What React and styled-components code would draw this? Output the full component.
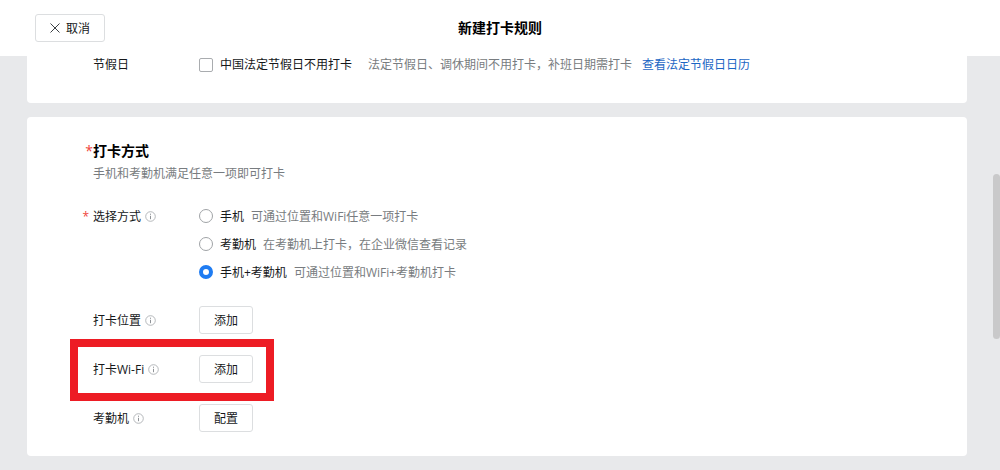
import { useState } from "react";
import styled, { createGlobalStyle } from "styled-components";

const methods = [
  { id: "phone", name: "手机", desc: "可通过位置和WiFi任意一项打卡" },
  { id: "machine", name: "考勤机", desc: "在考勤机上打卡，在企业微信查看记录" },
  { id: "both", name: "手机+考勤机", desc: "可通过位置和WiFi+考勤机打卡" },
];

const settings = [
  { id: "location", name: "打卡位置", action: "添加" },
  { id: "wifi", name: "打卡Wi-Fi", action: "添加", marked: true },
  { id: "device", name: "考勤机", action: "配置" },
];

function InfoIcon() {
  return (
    <svg width="11" height="11" viewBox="0 0 11 11" fill="none" aria-hidden="true">
      <circle cx="5.5" cy="5.5" r="4.8" stroke="#a3a7ab" strokeWidth="0.8" />
      <path d="M5.5 4.8V8.2" stroke="#8f9397" strokeWidth="1" />
      <path d="M5.5 2.7V3.8" stroke="#8f9397" strokeWidth="1" />
    </svg>
  );
}

function CloseIcon() {
  return (
    <svg width="10" height="10" viewBox="0 0 10 10" fill="none" aria-hidden="true">
      <path d="M0.5 0.5L9.5 9.5M9.5 0.5L0.5 9.5" stroke="#3c4044" strokeWidth="1" />
    </svg>
  );
}

function App() {
  const [method, setMethod] = useState("both");
  const [skipHoliday, setSkipHoliday] = useState(false);

  return (
    <>
      <GlobalStyle />
      <Header>
        <CancelButton type="button">
          <CloseIcon />
          取消
        </CancelButton>
        <PageTitle>新建打卡规则</PageTitle>
      </Header>
      <Main>
        <HolidayCard>
          <HolidayRow>
            <Label as="span">节假日</Label>
            <Option>
              <Checkbox
                type="checkbox"
                checked={skipHoliday}
                onChange={(e) => setSkipHoliday(e.target.checked)}
              />
              中国法定节假日不用打卡
            </Option>
            <HolidayHint>法定节假日、调休期间不用打卡，补班日期需打卡</HolidayHint>
            <CalendarLink href="#calendar">查看法定节假日日历</CalendarLink>
          </HolidayRow>
        </HolidayCard>

        <MethodCard>
          <SectionTitle>
            <Required>*</Required>打卡方式
          </SectionTitle>
          <SectionDesc>手机和考勤机满足任意一项即可打卡</SectionDesc>

          <MethodRow role="radiogroup" aria-labelledby="method-label">
            <Label as="span" id="method-label">
              <Required $wide>*</Required>选择方式
              <InfoIcon />
            </Label>
            <div>
              {methods.map(({ id, name, desc }) => (
                <Option key={id} $tall>
                  <Radio
                    type="radio"
                    name="method"
                    value={id}
                    checked={method === id}
                    onChange={() => setMethod(id)}
                  />
                  {name}
                  <Muted>{desc}</Muted>
                </Option>
              ))}
            </div>
          </MethodRow>

          <SettingList>
            {settings.map(({ id, name, action, marked }) => (
              <SettingRow key={id} $marked={marked}>
                <Label htmlFor={id}>
                  {name}
                  <InfoIcon />
                </Label>
                <Button type="button" id={id}>
                  {action}
                </Button>
              </SettingRow>
            ))}
          </SettingList>
        </MethodCard>
      </Main>
      <ScrollThumb />
    </>
  );
}

const GlobalStyle = createGlobalStyle`
  *, *::before, *::after {
    box-sizing: border-box;
  }

  body {
    margin: 0;
    min-height: 100vh;
    background: #e8e9eb;
    color: #16181a;
    font-family: "Open Sans", "Noto Sans CJK SC", sans-serif;
    font-size: 12px;
    line-height: 17px;
  }

  button, input {
    font: inherit;
    color: inherit;
  }
`;

const Header = styled.header`
  display: grid;
  grid-template-columns: 1fr auto 1fr;
  align-items: center;
  height: 56px;
  padding: 0 35px;
  background: #fff;
`;

const PageTitle = styled.h1`
  margin: 0;
  color: #000;
  font-size: 14px;
  font-weight: 700;
  line-height: 20px;
`;

const Button = styled.button`
  display: inline-flex;
  align-items: center;
  justify-content: center;
  gap: 6px;
  height: 28px;
  padding: 0 14px;
  border: 1px solid #dcdee0;
  border-radius: 3px;
  background: #fff;
  cursor: pointer;
  &:hover {
    background: #f5f6f7;
  }
`;

const CancelButton = styled(Button)`
  justify-self: start;
`;

const Main = styled.main`
  padding: 0 33px 14px 27px;
`;

const Card = styled.section`
  padding: 0 66px;
  border-radius: 4px;
  background: #fff;
`;

const HolidayCard = styled(Card)`
  padding-bottom: 30px;
  border-radius: 0 0 4px 4px;
`;

const MethodCard = styled(Card)`
  margin-top: 14px;
  padding-top: 24px;
  padding-bottom: 24px;
`;

const Row = styled.div`
  display: flex;
`;

const HolidayRow = styled(Row)`
  align-items: center;
`;

const MethodRow = styled(Row)`
  margin: 20px 0;
`;

const SettingList = styled.div`
  display: flex;
  flex-direction: column;
  gap: 21px;
`;

const SettingRow = styled(Row)`
  position: relative;
  ${({ $marked }) =>
    $marked &&
    `
    &::after {
      content: "";
      position: absolute;
      top: -16px;
      bottom: -18px;
      left: -23px;
      width: 204px;
      border: 8px solid #ed1c24;
      pointer-events: none;
    }
  `}
`;

const Label = styled.label`
  position: relative;
  display: flex;
  flex: none;
  align-items: center;
  gap: 4px;
  width: 106px;
  height: 28px;
  ${HolidayRow} & {
    height: 17px;
  }
`;

/* hangs to the left of the text it belongs to */
const Required = styled.span`
  position: absolute;
  right: 100%;
  color: #f0443c;
  font-weight: 400;
  ${({ $wide }) => $wide && "padding-right: 4px;"}
`;

const SectionTitle = styled.h2`
  position: relative;
  margin: 0;
  color: #000;
  font-size: 14px;
  font-weight: 700;
  line-height: 20px;
`;

const SectionDesc = styled.p`
  margin: 4px 0 0;
  color: #787c80;
`;

const Option = styled.label`
  display: flex;
  align-items: center;
  gap: 7px;
  height: ${({ $tall }) => ($tall ? "28px" : "17px")};
  white-space: nowrap;
  cursor: pointer;
`;

const Checkbox = styled.input`
  appearance: none;
  flex: none;
  width: 14px;
  height: 14px;
  margin: 0;
  border: 1px solid #a9acaf;
  border-radius: 2px;
  background: #fff;
  &:checked {
    border-color: #1f7cf2;
    background: #1f7cf2;
  }
`;

const Radio = styled.input`
  appearance: none;
  flex: none;
  width: 14px;
  height: 14px;
  margin: 0;
  border: 1px solid #a0a3a6;
  border-radius: 50%;
  background: #fff;
  &:checked {
    border: 4px solid #1f7cf2;
  }
`;

const Muted = styled.span`
  color: #787c80;
`;

const HolidayHint = styled(Muted)`
  margin: 0 10px 0 16px;
`;

const CalendarLink = styled.a`
  color: #1c66c4;
  text-decoration: none;
  &:hover {
    text-decoration: underline;
  }
`;

const ScrollThumb = styled.div`
  position: fixed;
  top: 174px;
  right: 0;
  width: 7px;
  height: 165px;
  border-radius: 4px;
  background: #c9c9ca;
`;

export default App;
